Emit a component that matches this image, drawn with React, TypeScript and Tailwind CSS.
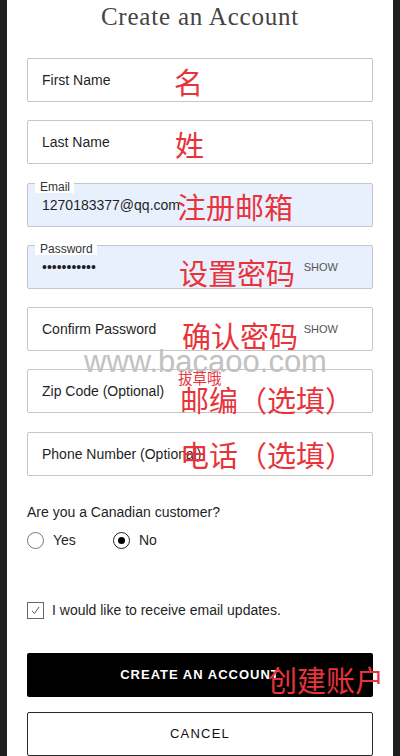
import React from 'react';

interface FieldProps {
    label?: string;
    placeholder?: string;
    value?: string;
    filled?: boolean;
    show?: boolean;
}

const Field: React.FC<FieldProps> = ({ label, placeholder, value, filled, show }) => (
    <div
        className={`relative flex h-[44px] items-center rounded-[2px] border border-[#c6c6c6] pl-[14px] pr-[34px] ${
            filled ? 'bg-[#e8f0fe]' : 'bg-white'
        }`}
    >
        {label && (
            <span className="absolute left-[7px] top-[-2px] h-[11px] bg-white pl-[5px] pr-[4px] text-[12px] leading-[11px] text-[#333]">
                {label}
            </span>
        )}
        <span className="flex-1 pt-[1px] text-[14px] text-[#1f1f1f]">{value ?? placeholder}</span>
        {show && <span className="text-[11px] text-[#555]">SHOW</span>}
    </div>
);

const Red: React.FC<{ x: number; y: number; small?: boolean; children: React.ReactNode }> = ({ x, y, small, children }) => (
    <span
        className={`absolute whitespace-nowrap text-[#e8333b] font-['Noto_Sans_CJK_SC',sans-serif] ${
            small ? 'text-[14.5px] leading-[15px]' : 'text-[29px] leading-[29px]'
        }`}
        style={{ left: x, top: y }}
    >
        {children}
    </span>
);

export default function App() {
    return (
        <div className="relative min-h-[756px] w-full overflow-hidden bg-[#1f1f1f] px-[7px] font-['Liberation_Sans',Arial,sans-serif]">
            <div className="flex min-h-[756px] flex-col bg-white px-[20px]">
                <h1 className="text-center font-['Liberation_Serif',serif] text-[25px] leading-[34px] tracking-[0.8px] text-[#444]">
                    Create an Account
                </h1>

                <div className="mt-[24px] flex flex-col gap-[18.3px]">
                    <Field placeholder="First Name" />
                    <Field placeholder="Last Name" />
                    <Field label="Email" value="1270183377@qq.com" filled />
                    <Field label="Password" value="•••••••••••" filled show />
                    <Field placeholder="Confirm Password" show />
                    <Field placeholder="Zip Code (Optional)" />
                    <Field placeholder="Phone Number (Optional)" />
                </div>

                <p className="mt-[26px] text-[14px] leading-[20px] text-[#1f1f1f]">Are you a Canadian customer?</p>
                <div className="mt-[10px] flex h-[18px] items-center text-[14px] text-[#1f1f1f]">
                    <label className="flex w-[86px] items-center gap-[9px]">
                        <span className="h-[17px] w-[17px] rounded-full border border-[#777]" />
                        Yes
                    </label>
                    <label className="flex items-center gap-[9px]">
                        <span className="flex h-[17px] w-[17px] items-center justify-center rounded-full border-[1.5px] border-[#1f1f1f]">
                            <span className="h-[7px] w-[7px] rounded-full bg-black" />
                        </span>
                        No
                    </label>
                </div>

                <label className="mt-[50px] flex items-center gap-[8px] text-[14px] text-[#1f1f1f]">
                    <span className="flex h-[17px] w-[17px] items-center justify-center border border-[#666]">
                        <svg width="13" height="13" viewBox="0 0 13 13" fill="none">
                            <path d="M3 7 L5.5 9.5 L10 3" stroke="#555" strokeWidth="1" />
                        </svg>
                    </span>
                    I would like to receive email updates.
                </label>

                <button className="mt-[32px] h-[44px] rounded-[2px] bg-black text-[13px] font-bold tracking-[1px] text-white">
                    CREATE AN ACCOUNT
                </button>
                <button className="mt-[15px] h-[44px] rounded-[2px] border border-[#2b2b2b] bg-white text-[13px] tracking-[1.2px] text-[#111]">
                    CANCEL
                </button>
            </div>

            <span className="absolute left-[84px] top-[345px] text-[31px] leading-[34px] text-[#c2c2c2]">www.bacaoo.com</span>

            <Red x={174} y={67}>名</Red>
            <Red x={175} y={130}>姓</Red>
            <Red x={177} y={192}>注册邮箱</Red>
            <Red x={179} y={258}>设置密码</Red>
            <Red x={182} y={321}>确认密码</Red>
            <Red x={178} y={370} small>拔草哦</Red>
            <Red x={180} y={385}>邮编（选填）</Red>
            <Red x={180} y={440}>电话（选填）</Red>
            <Red x={268} y={665}>创建账户</Red>
        </div>
    );
}
